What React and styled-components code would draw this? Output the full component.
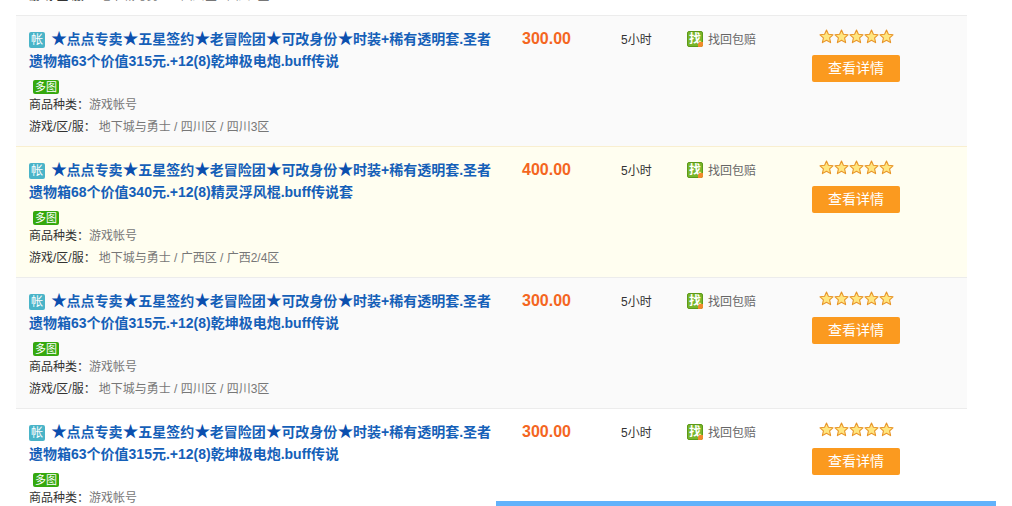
import React from "react";
import styled, { createGlobalStyle } from "styled-components";

const TITLE_HEAD = ["点点专卖", "五星签约", "老冒险团", "可改身份", "时装+稀有透明套.圣者遗物箱"];

const items = [
    { id: 0, title: "63个价值315元.+12(8)乾坤极电炮.buff传说", price: "300.00", server: "四川区 / 四川3区", tone: "white" },
    { id: 1, title: "63个价值315元.+12(8)乾坤极电炮.buff传说", price: "300.00", server: "四川区 / 四川3区", tone: "gray" },
    { id: 2, title: "68个价值340元.+12(8)精灵浮风棍.buff传说套", price: "400.00", server: "广西区 / 广西2/4区", tone: "yellow" },
    { id: 3, title: "63个价值315元.+12(8)乾坤极电炮.buff传说", price: "300.00", server: "四川区 / 四川3区", tone: "gray" },
    { id: 4, title: "63个价值315元.+12(8)乾坤极电炮.buff传说", price: "300.00", server: "四川区 / 四川3区", tone: "white" },
];

const tones = { white: "#ffffff", gray: "#fafafa", yellow: "#fffef0" };
const lines = { white: "#ececec", gray: "#ececec", yellow: "#f9efd0" };

function Star() {
    return (
        <svg width="15" height="15" viewBox="0 0 15 15">
            <path
                d="M7.5 1 L9.4 5.3 L14 5.8 L10.6 8.9 L11.6 13.6 L7.5 11.2 L3.4 13.6 L4.4 8.9 L1 5.8 L5.6 5.3 Z"
                fill="#ffe680"
                stroke="#e8962a"
                strokeWidth="1.1"
                strokeLinejoin="round"
            />
        </svg>
    );
}

function Row({ item }) {
    return (
        <RowBox $tone={item.tone}>
            <Main>
                <Title>
                    <TypeIcon>帐</TypeIcon>
                    {TITLE_HEAD.map((part) => (
                        <span key={part}>
                            <Mark>★</Mark>
                            {part}
                        </span>
                    ))}
                    {item.title}
                </Title>
                <Tag>多图</Tag>
                <Info>
                    <b>商品种类：</b>游戏帐号
                </Info>
                <Info>
                    <b>游戏/区/服：</b>
                    <Server>地下城与勇士 / {item.server}</Server>
                </Info>
            </Main>
            <Price>{item.price}</Price>
            <Time>5小时</Time>
            <Safe>
                <SafeIcon>找</SafeIcon>
                找回包赔
            </Safe>
            <Action>
                <Stars>
                    {[0, 1, 2, 3, 4].map((n) => (
                        <Star key={n} />
                    ))}
                </Stars>
                <DetailBtn>查看详情</DetailBtn>
            </Action>
        </RowBox>
    );
}

export default function App() {
    return (
        <>
            <GlobalStyle />
            <List>
                {items.map((item) => (
                    <Row item={item} key={item.id} />
                ))}
            </List>
            <BottomBar />
        </>
    );
}

const GlobalStyle = createGlobalStyle`
    html, body {
        margin: 0;
        padding: 0;
        height: 506px;
        overflow: hidden;
        background: #fff;
        font-family: "Liberation Sans", "Noto Sans CJK SC", sans-serif;
        font-size: 12px;
        color: #333;
    }
`;

const List = styled.div`
    width: 951px;
    margin: -116px 0 0 16px;
`;

const RowBox = styled.div`
    display: grid;
    grid-template-columns: 493px 99px 66px 125px 1fr;
    height: 131px;
    box-sizing: border-box;
    padding: 13px 0 0 13px;
    background: ${(p) => tones[p.$tone]};
    border-top: 1px solid ${(p) => lines[p.$tone]};
`;

const Main = styled.div`
    width: 470px;
    margin-top: -1px;
`;

const Title = styled.div`
    font-size: 14px;
    font-weight: bold;
    line-height: 22px;
    color: #1560b8;
`;

const Mark = styled.span`
    display: inline-block;
    width: 15.6px;
    font-family: "Noto Sans CJK SC", sans-serif;
    font-size: 16px;
    line-height: 16px;
    text-align: center;
    color: #0b4fae;
`;

const TypeIcon = styled.span`
    display: inline-block;
    width: 16px;
    height: 16px;
    margin-right: 6px;
    border-radius: 2px;
    background: #4ab4c8;
    color: #fff;
    font-size: 12px;
    font-weight: normal;
    line-height: 16px;
    text-align: center;
    vertical-align: 0;
`;

const Tag = styled.div`
    width: 26px;
    height: 14px;
    margin: 8px 0 0 4px;
    border-radius: 2px;
    background: #35a80e;
    color: #fff;
    font-size: 11px;
    line-height: 14px;
    text-align: center;
`;

const Info = styled.div`
    line-height: 22px;
    color: #777;
    b {
        font-weight: normal;
        color: #333;
    }
`;

const Server = styled.span`
    margin-left: 3px;
`;

const Price = styled.div`
    font-size: 16px;
    font-weight: bold;
    line-height: 20px;
    color: #f4661f;
`;

const Time = styled.div`
    line-height: 22px;
    color: #333;
`;

const Safe = styled.div`
    display: flex;
    align-items: center;
    gap: 5px;
    height: 18px;
    color: #666;
`;

const SafeIcon = styled.span`
    position: relative;
    width: 14px;
    height: 14px;
    margin-top: 2px;
    border: 1px solid #5c9a18;
    border-radius: 2px;
    background: #78b52a;
    color: #fff;
    font-size: 12px;
    font-weight: bold;
    line-height: 14px;
    text-align: center;
    &::after {
        content: "";
        position: absolute;
        right: -1px;
        bottom: -1px;
        width: 5px;
        height: 5px;
        border-radius: 2px 0 2px 0;
        background: #f08a2c;
    }
`;

const Action = styled.div`
    display: flex;
    flex-direction: column;
    align-items: center;
    width: 88px;
`;

const Stars = styled.div`
    display: flex;
    height: 17px;
    margin-bottom: 9px;
`;

const DetailBtn = styled.button`
    width: 88px;
    height: 27px;
    padding: 0;
    border: none;
    border-radius: 2px;
    background: #fb9a1f;
    color: #fff;
    font-family: inherit;
    font-size: 14px;
    line-height: 27px;
`;

const BottomBar = styled.div`
    position: fixed;
    left: 496px;
    bottom: 0;
    width: 500px;
    height: 5px;
    background: #62b2fb;
`;
